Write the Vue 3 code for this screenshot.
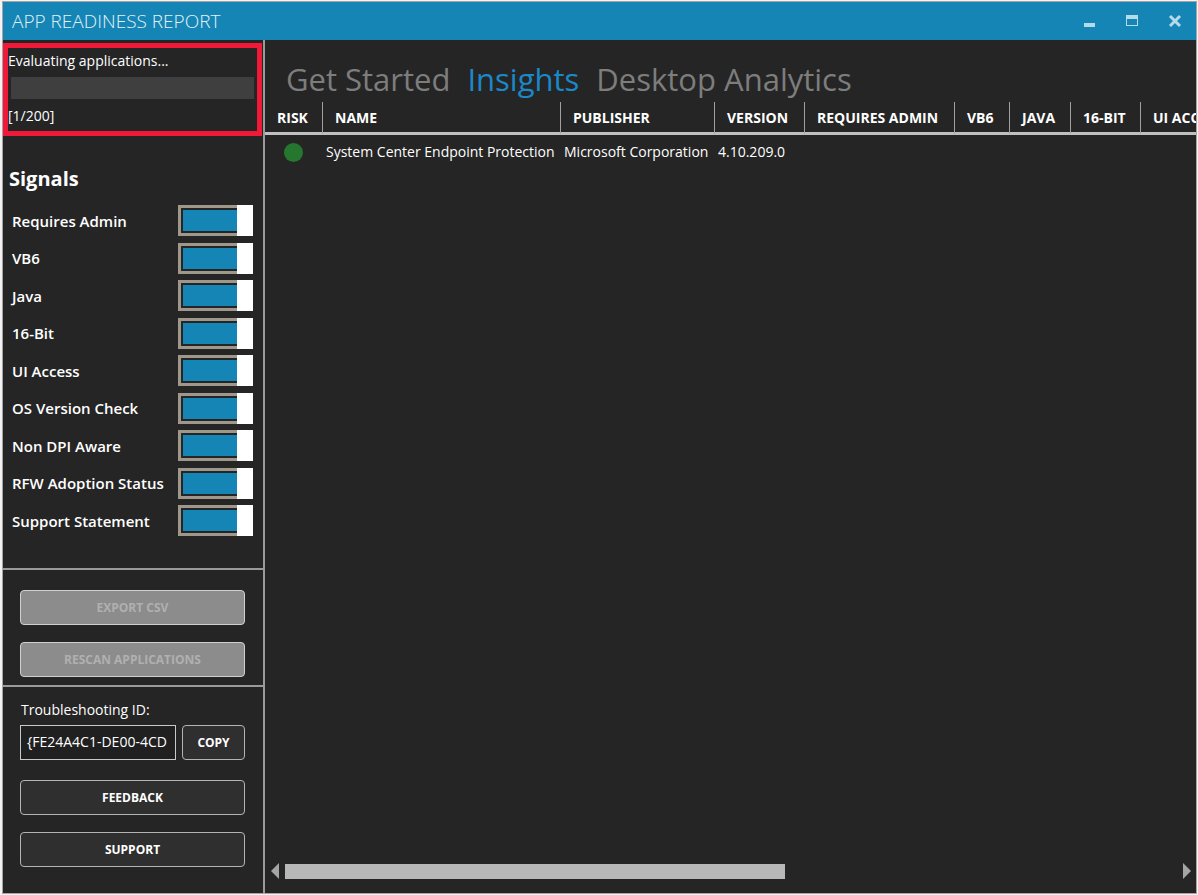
<script setup>
import { ref } from 'vue'

const signals = ref([
  { id: 'admin', label: 'Requires Admin', on: true },
  { id: 'vb6', label: 'VB6', on: true },
  { id: 'java', label: 'Java', on: true },
  { id: 'bit16', label: '16-Bit', on: true },
  { id: 'ui', label: 'UI Access', on: true },
  { id: 'os', label: 'OS Version Check', on: true },
  { id: 'dpi', label: 'Non DPI Aware', on: true },
  { id: 'rfw', label: 'RFW Adoption Status', on: true },
  { id: 'support', label: 'Support Statement', on: true }
])
const tabs = ['Get Started', 'Insights', 'Desktop Analytics']
const active = ref('Insights')
const columns = [
  { name: 'RISK', cls: 'c-risk' },
  { name: 'NAME', cls: 'c-name' },
  { name: 'PUBLISHER', cls: 'c-publisher' },
  { name: 'VERSION', cls: 'c-version' },
  { name: 'REQUIRES ADMIN', cls: 'c-admin' },
  { name: 'VB6', cls: 'c-vb6' },
  { name: 'JAVA', cls: 'c-java' },
  { name: '16-BIT', cls: 'c-bit' },
  { name: 'UI ACCESS', cls: 'c-ui' }
]
const troubleshootingId = ref('{FE24A4C1-DE00-4CD')
</script>

<template>
  <div class="window">
    <header class="titlebar">
      <h1>APP READINESS REPORT</h1>
      <div class="controls">
        <button type="button" aria-label="Minimize">
          <svg width="14" height="14" viewBox="0 0 14 14"><rect x="2" y="9" width="11" height="4" /></svg>
        </button>
        <button type="button" aria-label="Maximize">
          <svg width="14" height="14" viewBox="0 0 14 14"><path fill-rule="evenodd" d="M1 1h12v11H1z M2 5v6h10V5z" /></svg>
        </button>
        <button type="button" aria-label="Close">
          <svg width="14" height="14" viewBox="0 0 14 14"><path d="M2 2l10 10M12 2L2 12" fill="none" stroke="currentColor" stroke-width="3" /></svg>
        </button>
      </div>
    </header>

    <div class="body">
      <aside class="sidebar">
        <section class="progress">
          <div>Evaluating applications...</div>
          <div class="bar" role="progressbar" aria-label="Evaluating applications" aria-valuenow="1" aria-valuemin="0" aria-valuemax="200"></div>
          <div>[1/200]</div>
        </section>

        <section class="signals">
          <h2>Signals</h2>
          <div class="signal-list">
            <div v-for="s in signals" :key="s.id" class="signal">
              <label :for="s.id">{{ s.label }}</label>
              <input :id="s.id" v-model="s.on" type="checkbox" class="toggle" role="switch">
            </div>
          </div>
        </section>

        <section class="actions">
          <button type="button" class="btn" disabled>EXPORT CSV</button>
          <button type="button" class="btn" disabled>RESCAN APPLICATIONS</button>
        </section>

        <section class="help">
          <label for="tid">Troubleshooting ID:</label>
          <div class="id-row">
            <input id="tid" v-model="troubleshootingId" type="text" readonly>
            <button type="button" class="btn copy">COPY</button>
          </div>
          <button type="button" class="btn">FEEDBACK</button>
          <button type="button" class="btn">SUPPORT</button>
        </section>
      </aside>

      <main class="main">
        <nav class="tabs">
          <button v-for="t in tabs" :key="t" type="button" :class="{ active: t === active }" @click="active = t">{{ t }}</button>
        </nav>
        <div class="grid">
          <table>
            <thead>
              <tr><th v-for="c in columns" :key="c.name" :class="c.cls">{{ c.name }}</th></tr>
            </thead>
            <tbody>
              <tr>
                <td><span class="dot" role="img" aria-label="Low risk"></span></td>
                <td>System Center Endpoint Protection</td>
                <td>Microsoft Corporation</td>
                <td>4.10.209.0</td>
                <td></td><td></td><td></td><td></td><td></td>
              </tr>
            </tbody>
          </table>
        </div>
        <div class="scrollbar">
          <button type="button" aria-label="Scroll left">
            <svg width="8" height="16" viewBox="0 0 8 16"><path d="M8 0v16L0 8z" /></svg>
          </button>
          <div class="track"><div class="thumb"></div></div>
          <button type="button" aria-label="Scroll right">
            <svg width="8" height="16" viewBox="0 0 8 16"><path d="M0 0v16l8-8z" /></svg>
          </button>
        </div>
      </main>
    </div>
  </div>
</template>

<style>
body { background: #f4f2f2; }
</style>

<style scoped>
* { box-sizing: border-box; }
.window {
  display: flex;
  flex-direction: column;
  height: calc(100vh - 2px);
  margin: 1px 1px 1px 2px;
  border: 1px solid #a5a5a5;
  background: #252525;
  color: #fff;
  font: 14px/20px "Open Sans", "Noto Sans", sans-serif;
}
button, input { font: inherit; color: inherit; margin: 0; }
.titlebar {
  display: flex;
  align-items: center;
  justify-content: space-between;
  height: 38px;
  padding: 0 14px 0 9px;
  background: #1585b5;
}
h1 { margin: 0; font-size: 19px; font-weight: 300; line-height: 24px; color: #e4f2f8; }
.controls { display: flex; gap: 29px; }
.controls button { display: block; width: 14px; height: 14px; padding: 0; border: 0; background: none; color: #b4dbea; }
.controls svg, .scrollbar svg { display: block; fill: currentColor; }
.body { display: flex; flex: 1; min-height: 0; }
.sidebar {
  display: flex;
  flex-direction: column;
  flex: none;
  width: 262px;
  border-right: 2px solid #9a9a9a;
}
.progress { margin: 3px 1px 0 0; padding: 3px 3px 5px 0; border: 5px solid #f01a38; }
.bar { height: 22px; margin: 6px 0 7px 3px; background: #3f3f3f; }
.signals { flex: 1; padding: 27px 10px 0 9px; }
h2 { margin: 0 -3px 10px; font-size: 20px; font-weight: 700; line-height: 32px; }
.signal-list { display: flex; flex-direction: column; justify-content: space-between; height: 331px; }
.signal { display: flex; align-items: center; justify-content: space-between; font-size: 15px; font-weight: 600; white-space: nowrap; }
.toggle {
  appearance: none;
  position: relative;
  flex: none;
  width: 75px;
  height: 31px;
  border: 3px solid #9f978a;
  padding: 2px;
  background: #1585b5 content-box;
}
.toggle::after {
  content: "";
  position: absolute;
  top: -3px;
  right: -3px;
  width: 16px;
  height: 31px;
  background: #fff;
}
.toggle:not(:checked) { background: none; }
.toggle:not(:checked)::after { right: auto; left: -3px; }
.actions, .help { display: flex; flex-direction: column; gap: 17px; padding: 20px 18px 8px 17px; border-top: 2px solid #9a9a9a; }
.btn {
  height: 35px;
  padding: 0;
  border: 1px solid #b4b4b4;
  border-radius: 4px;
  background: #2f2f2f;
  font-size: 12px;
  font-weight: 700;
}
.btn:disabled { border-color: #d0d0d0; background: #8c8c8c; color: #b0b0b0; }
.help { padding: 13px 18px 26px 17px; }
.help label { margin: 0 1px -12px; }
.id-row { display: flex; gap: 6px; margin-bottom: 3px; }
.id-row input {
  flex: 1;
  min-width: 0;
  height: 35px;
  padding: 0 0 2px 6px;
  border: 1px solid #c8c8c8;
  border-radius: 0;
  background: #202020;
}
.copy { width: 63px; }
.main { display: flex; flex-direction: column; flex: 1; min-width: 0; }
.tabs { display: flex; gap: 17px; padding: 16px 21px 0; }
.tabs button { padding: 0; border: 0; background: none; color: #7d7d7d; font-size: 31px; line-height: 46px; white-space: nowrap; }
.tabs .active { color: #1a88c9; }
.grid { flex: 1; min-height: 0; overflow: hidden; }
table { table-layout: fixed; width: 1000px; border-collapse: separate; border-spacing: 0; }
th {
  height: 33px;
  padding: 1px 0 0 12px;
  border-right: 1px solid #a0a0a0;
  border-bottom: 3px solid #c0c0c0;
  text-align: left;
  font-weight: 700;
  white-space: nowrap;
}
td { height: 34px; padding: 0 0 0 3px; white-space: nowrap; }
td:first-child { padding-left: 19px; }
.c-risk { width: 58px; }
.c-name { width: 238px; }
.c-publisher { width: 154px; }
.c-version { width: 90px; }
.c-admin { width: 150px; }
.c-vb6 { width: 55px; }
.c-java { width: 61px; }
.c-bit { width: 70px; }
.dot { display: block; width: 19px; height: 19px; border-radius: 50%; background: #25762f; }
.scrollbar { display: flex; align-items: center; gap: 6px; height: 16px; margin: 0 5px 14px 6px; color: #a5a5a5; }
.scrollbar button { width: 8px; height: 16px; padding: 0; border: 0; background: none; }
.track { flex: 1; height: 15px; }
.thumb { width: 56%; height: 15px; background: #b8b8b8; }
</style>
